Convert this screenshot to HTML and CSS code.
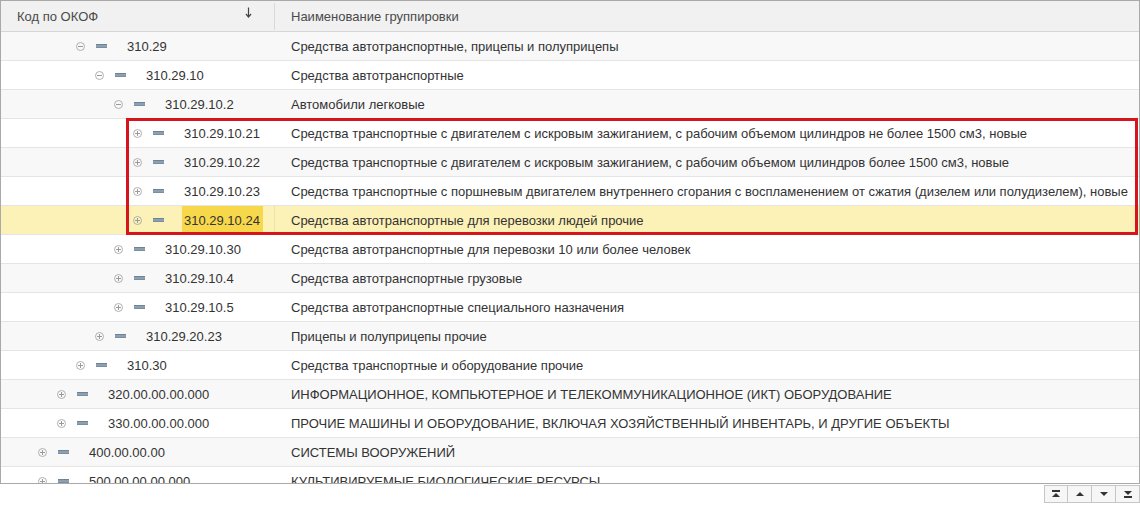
FILE: index.html
```html
<!DOCTYPE html>
<html lang="ru">
<head>
<meta charset="utf-8">
<title>ОКОФ</title>
<link rel="stylesheet" href="styles.css">
</head>
<body>
<div class="grid">
  <div class="head">
    <div class="hcell hcode">Код по ОКОФ
      <svg class="sort" width="7" height="11" viewBox="0 0 7 11"><path d="M3.5 0.5V9.5" stroke="#444" stroke-width="1.2" fill="none"/><path d="M1 7L3.5 10L6 7" stroke="#444" stroke-width="1.2" fill="none"/></svg>
    </div>
    <div class="hcell hname">Наименование группировки</div>
  </div>
  <div class="body">
    <div class="row"><div class="ccode l2"><span class="exp minus"></span><span class="gi"></span><span class="code">310.29</span></div><div class="cname">Средства автотранспортные, прицепы и полуприцепы</div></div>
    <div class="row"><div class="ccode l3"><span class="exp minus"></span><span class="gi"></span><span class="code">310.29.10</span></div><div class="cname">Средства автотранспортные</div></div>
    <div class="row"><div class="ccode l4"><span class="exp minus"></span><span class="gi"></span><span class="code">310.29.10.2</span></div><div class="cname">Автомобили легковые</div></div>
    <div class="row"><div class="ccode l5"><span class="exp plus"></span><span class="gi"></span><span class="code">310.29.10.21</span></div><div class="cname">Средства транспортные с двигателем с искровым зажиганием, с рабочим объемом цилиндров не более 1500 см3, новые</div></div>
    <div class="row"><div class="ccode l5"><span class="exp plus"></span><span class="gi"></span><span class="code">310.29.10.22</span></div><div class="cname">Средства транспортные с двигателем с искровым зажиганием, с рабочим объемом цилиндров более 1500 см3, новые</div></div>
    <div class="row"><div class="ccode l5"><span class="exp plus"></span><span class="gi"></span><span class="code">310.29.10.23</span></div><div class="cname">Средства транспортные с поршневым двигателем внутреннего сгорания с воспламенением от сжатия (дизелем или полудизелем), новые</div></div>
    <div class="row selected"><div class="ccode l5"><span class="exp plus"></span><span class="gi"></span><span class="code current">310.29.10.24</span></div><div class="cname">Средства автотранспортные для перевозки людей прочие</div></div>
    <div class="row"><div class="ccode l4"><span class="exp plus"></span><span class="gi"></span><span class="code">310.29.10.30</span></div><div class="cname">Средства автотранспортные для перевозки 10 или более человек</div></div>
    <div class="row"><div class="ccode l4"><span class="exp plus"></span><span class="gi"></span><span class="code">310.29.10.4</span></div><div class="cname">Средства автотранспортные грузовые</div></div>
    <div class="row"><div class="ccode l4"><span class="exp plus"></span><span class="gi"></span><span class="code">310.29.10.5</span></div><div class="cname">Средства автотранспортные специального назначения</div></div>
    <div class="row"><div class="ccode l3"><span class="exp plus"></span><span class="gi"></span><span class="code">310.29.20.23</span></div><div class="cname">Прицепы и полуприцепы прочие</div></div>
    <div class="row"><div class="ccode l2"><span class="exp plus"></span><span class="gi"></span><span class="code">310.30</span></div><div class="cname">Средства транспортные и оборудование прочие</div></div>
    <div class="row"><div class="ccode l1"><span class="exp plus"></span><span class="gi"></span><span class="code">320.00.00.00.000</span></div><div class="cname">ИНФОРМАЦИОННОЕ, КОМПЬЮТЕРНОЕ И ТЕЛЕКОММУНИКАЦИОННОЕ (ИКТ) ОБОРУДОВАНИЕ</div></div>
    <div class="row"><div class="ccode l1"><span class="exp plus"></span><span class="gi"></span><span class="code">330.00.00.00.000</span></div><div class="cname">ПРОЧИЕ МАШИНЫ И ОБОРУДОВАНИЕ, ВКЛЮЧАЯ ХОЗЯЙСТВЕННЫЙ ИНВЕНТАРЬ, И ДРУГИЕ ОБЪЕКТЫ</div></div>
    <div class="row"><div class="ccode l0"><span class="exp plus"></span><span class="gi"></span><span class="code">400.00.00.00</span></div><div class="cname">СИСТЕМЫ ВООРУЖЕНИЙ</div></div>
    <div class="row"><div class="ccode l0"><span class="exp plus"></span><span class="gi"></span><span class="code">500.00.00.00.000</span></div><div class="cname">КУЛЬТИВИРУЕМЫЕ БИОЛОГИЧЕСКИЕ РЕСУРСЫ</div></div>
  </div>
  <div class="redbox"></div>
</div>
<div class="pager">
  <div class="pbtn"><svg width="10" height="8" viewBox="0 0 10 8"><rect x="1" y="0" width="8" height="2" fill="#333"/><path d="M1 7L5 3L9 7Z" fill="#333"/></svg></div>
  <div class="pbtn"><svg width="10" height="8" viewBox="0 0 10 8"><path d="M1 6L5 2L9 6Z" fill="#333"/></svg></div>
  <div class="pbtn"><svg width="10" height="8" viewBox="0 0 10 8"><path d="M1 2L5 6L9 2Z" fill="#333"/></svg></div>
  <div class="pbtn"><svg width="10" height="8" viewBox="0 0 10 8"><path d="M1 1L5 5L9 1Z" fill="#333"/><rect x="1" y="6" width="8" height="2" fill="#333"/></svg></div>
</div>
</body>
</html>
```

FILE: styles.css
```css
html, body {
  margin: 0;
  padding: 0;
  background: #ffffff;
}
body {
  font-family: Arial, "Liberation Sans", sans-serif;
  font-size: 13px;
  color: #333333;
}
.grid {
  position: relative;
  width: 1140px;
  height: 484px;
  box-sizing: border-box;
  border: 1px solid #a9a9a9;
  overflow: hidden;
  background: #fcfcfc;
}
.head {
  display: flex;
  height: 30px;
  background: #f1f1f1;
  border-bottom: 1px solid #d6d6d6;
  color: #4a4a4a;
  font-size: 13px;
}
.hcell {
  display: flex;
  align-items: center;
  box-sizing: border-box;
}
.hcode {
  width: 274px;
  padding-left: 16px;
  border-right: 1px solid #d9d9d9;
  margin: 2px 0 1px;
  position: relative;
}
.sort {
  position: absolute;
  left: 244px;
  top: 4px;
}
.hname {
  padding-left: 16px;
}
.body {
  height: 451px;
  overflow: hidden;
}
.row {
  display: flex;
  height: 28px;
  border-bottom: 1px solid #e5e5e5;
  background: #ffffff;
}
.row:nth-child(odd) {
  background: #f8f8f8;
}
.row.selected {
  background: #fcf1b6;
}
.ccode {
  width: 274px;
  box-sizing: border-box;
  display: flex;
  align-items: center;
  flex: none;
}
.row.selected .ccode {
  border-right: 1px solid #efe1a0;
}
.l0 { padding-left: 37px; }
.l1 { padding-left: 56px; }
.l2 { padding-left: 75px; }
.l3 { padding-left: 94px; }
.l4 { padding-left: 113px; }
.l5 { padding-left: 132px; }
.exp {
  width: 9px;
  height: 9px;
  box-sizing: border-box;
  border: 1px solid #b0b0b0;
  border-radius: 50%;
  position: relative;
  margin-right: 11px;
  flex: none;
}
.exp::before {
  content: "";
  position: absolute;
  left: 1px;
  top: 3px;
  width: 5px;
  height: 1px;
  background: #9a9a9a;
}
.exp.plus::after {
  content: "";
  position: absolute;
  left: 3px;
  top: 1px;
  width: 1px;
  height: 5px;
  background: #9a9a9a;
}
.gi {
  width: 11px;
  height: 4px;
  box-sizing: border-box;
  background: #8e9fb0;
  border-top: 1px solid #6f8397;
  border-bottom: 1px solid #7a8ea2;
  margin-right: 20px;
  flex: none;
}
.code {
  white-space: nowrap;
}
.code.current {
  align-self: stretch;
  display: flex;
  align-items: center;
  background: #f8d84b;
  padding: 0 3px 0 2px;
  margin-left: -2px;
}
.cname {
  padding-left: 16px;
  display: flex;
  align-items: center;
  white-space: nowrap;
}
.redbox {
  position: absolute;
  left: 125px;
  top: 117px;
  width: 1012px;
  height: 117px;
  box-sizing: border-box;
  border: 3px solid #d6141c;
  pointer-events: none;
}
.pager {
  display: flex;
  justify-content: flex-end;
  padding-top: 1px;
}
.pbtn {
  width: 24px;
  height: 18px;
  box-sizing: border-box;
  border: 1px solid #c6c6c6;
  border-left: none;
  background: #f6f6f6;
  display: flex;
  align-items: center;
  justify-content: center;
}
.pbtn:first-child {
  border-left: 1px solid #c6c6c6;
}
```
